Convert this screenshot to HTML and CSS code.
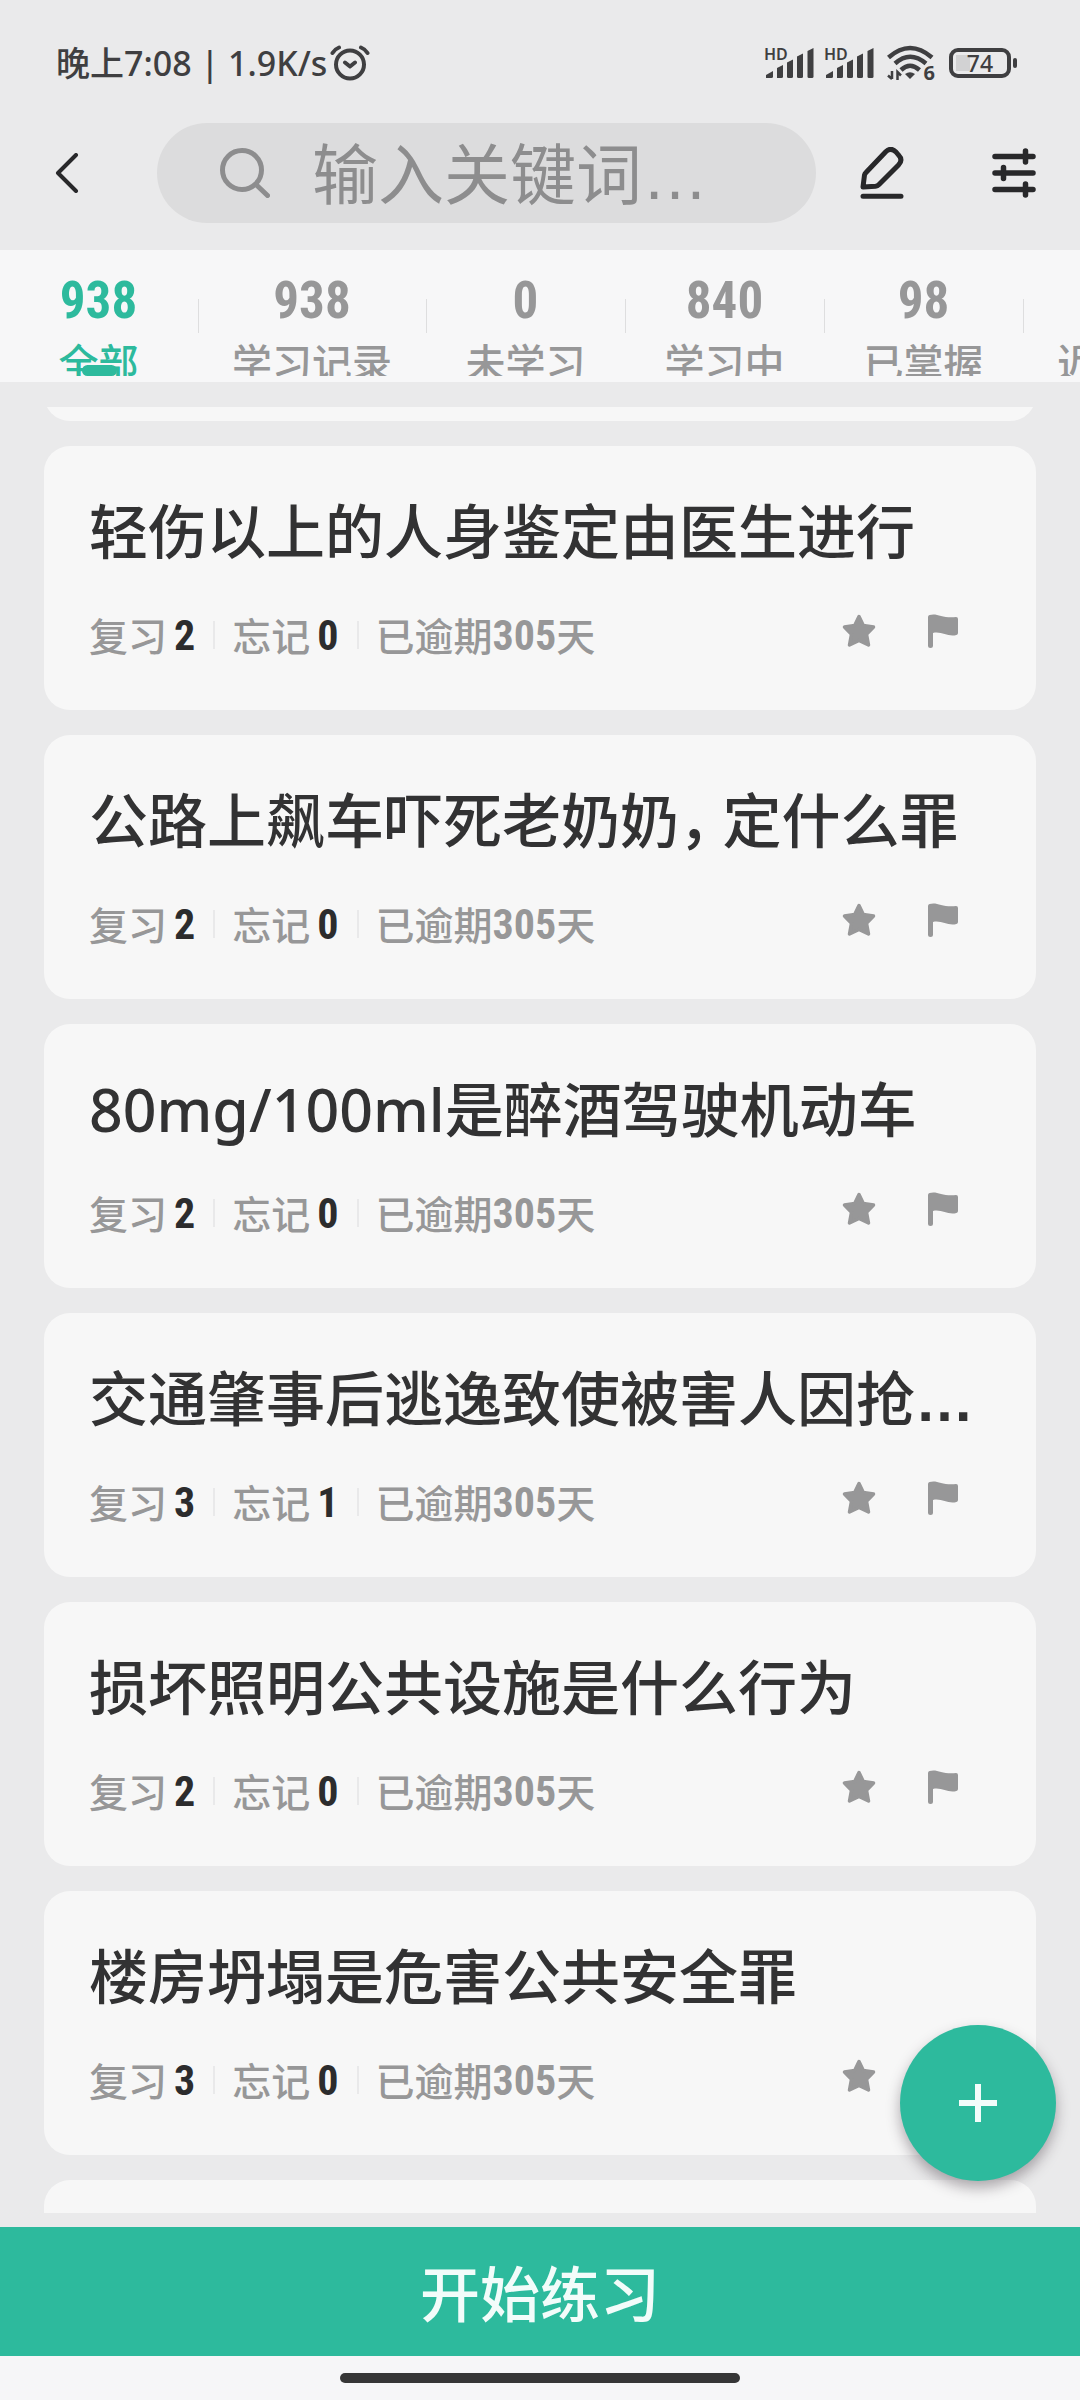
FILE: index.html
```html
<!DOCTYPE html>
<html lang="zh-CN">
<head>
<meta charset="utf-8">
<meta name="viewport" content="width=device-width, initial-scale=1">
<title>学习记录</title>
<link rel="stylesheet" href="styles.css">
</head>
<body>
<svg class="sprite" aria-hidden="true">
  <symbol id="star" viewBox="0 0 34 34"><path d="M17 2.5 21.3 11.5 31.500 13 24.500 20.300 26.500 31 17 26.500 7.500 31 9.500 20.300 2.500 13 12.700 11.500Z" fill="currentColor" stroke="currentColor" stroke-width="3.500" stroke-linejoin="round"/></symbol>
  <symbol id="flag" viewBox="0 0 30 34"><path d="M0 3Q0 1.500 1.500 1C9-1.500 14 4.500 28 3Q30 3 30 5V19Q30 20.500 28.500 21C20 23.500 14 17 5 19V31.500a2.500 2.500 0 0 1-5 0Z" fill="currentColor"/></symbol>
  <symbol id="signal" viewBox="0 0 48 30"><g fill="currentColor"><path d="M0 30V27L7 23V28.500Q7 30 5.500 30Z"/><path d="M11 30V20L17 17V28.500Q17 30 15.500 30Z"/><path d="M21 28.500V14.500L27 11.500V28.500Q27 30 25.500 30H22.500Q21 30 21 28.500Z"/><path d="M31 28.500V8.500L37 5.500V28.500Q37 30 35.500 30H32.500Q31 30 31 28.500Z"/><path d="M41.500 28.500V3L47.500 0V28.500Q47.500 30 46 30H43Q41.500 30 41.500 28.500Z"/></g></symbol>
</svg>
<div class="app">
  <div class="status">
    <span class="clock">晚上7:08 | 1.9K/s</span>
    <svg class="alarm" viewBox="0 0 40 36" fill="none" stroke="currentColor" stroke-width="4" stroke-linecap="round" stroke-linejoin="round"><circle cx="20" cy="19.500" r="14"/><path d="M15 17.500 20 21.500 25 17.500M2.500 8Q5 4 9 2.500M37.500 8Q35 4 31 2.500"/></svg>
    <div class="status-right">
      <div class="sim"><span class="hd">HD</span><svg class="bars"><use href="#signal"/></svg></div>
      <div class="sim"><span class="hd">HD</span><svg class="bars"><use href="#signal"/></svg></div>
      <div class="wifi">
        <svg viewBox="0 0 48 36" fill="none" stroke="currentColor" stroke-width="4.500"><path d="M1.500 12.500Q23 -6.500 45 12.500M8 18.500Q23 5 39 18.500M14 25Q23 16.500 32.500 25"/><path d="M23 34 18 29Q23 25.500 28 29Z" fill="currentColor" stroke="none"/><path d="M5 26V34M5 34 1 30.500M10.500 35V27L14 30.500" stroke-width="2.500"/></svg>
        <span class="gen">6</span>
      </div>
      <div class="battery"><span class="level">74</span></div>
    </div>
  </div>

  <header class="toolbar">
    <button class="icon-btn back" aria-label="返回"><svg viewBox="0 0 24 40" fill="none" stroke="currentColor" stroke-width="4" stroke-linecap="round" stroke-linejoin="round"><path d="M21 2 3 20 21 38"/></svg></button>
    <label class="search">
      <svg viewBox="0 0 50 50" fill="none" stroke="currentColor" stroke-width="5" stroke-linecap="round"><circle cx="22" cy="22" r="19.500"/><path d="M36.500 37 47.500 47.500"/></svg>
      <input type="text" placeholder="输入关键词…" aria-label="输入关键词">
    </label>
    <button class="icon-btn" aria-label="编辑"><svg viewBox="0 0 44 52" fill="none" stroke="currentColor" stroke-width="5" stroke-linecap="round" stroke-linejoin="round"><path d="M3 40 4.500 28Q5 26.500 6 25.500L26 4.500Q31 0 36 5L38.500 8Q43.500 13 38.500 18L19 37.500Q17.500 39 15.500 39.200ZM3 49.300H41"/></svg></button>
    <button class="icon-btn" aria-label="筛选"><svg viewBox="0 0 44 50" fill="none" stroke="currentColor" stroke-width="5.500" stroke-linecap="round"><path d="M3 8.500H41M3 25H41M3 41.500H41M33.500 3V14M11.500 19.500V30.500M33.500 36V47"/></svg></button>
  </header>

  <nav class="tabs">
    <a class="tab active" href="#all"><b>938</b><span>全部</span></a>
    <a class="tab" href="#records"><b>938</b><span>学习记录</span></a>
    <a class="tab" href="#new"><b>0</b><span>未学习</span></a>
    <a class="tab" href="#learning"><b>840</b><span>学习中</span></a>
    <a class="tab" href="#mastered"><b>98</b><span>已掌握</span></a>
    <a class="tab" href="#recent"><b></b><span>近期学习</span></a>
  </nav>

  <main class="list">
    <article class="card scrolled"></article>
    <article class="card">
      <h2>轻伤以上的人身鉴定由医生进行</h2>
      <div class="meta"><span>复习<b>2</b></span><span>忘记<b>0</b></span><span>已逾期<i>305</i>天</span>
        <div class="marks"><button aria-label="收藏"><svg class="star"><use href="#star"/></svg></button><button aria-label="标记"><svg class="flag"><use href="#flag"/></svg></button></div></div>
    </article>
    <article class="card">
      <h2>公路上飙车吓死老奶奶<span class="comma">，</span>定什么罪</h2>
      <div class="meta"><span>复习<b>2</b></span><span>忘记<b>0</b></span><span>已逾期<i>305</i>天</span>
        <div class="marks"><button aria-label="收藏"><svg class="star"><use href="#star"/></svg></button><button aria-label="标记"><svg class="flag"><use href="#flag"/></svg></button></div></div>
    </article>
    <article class="card">
      <h2>80mg/100ml是醉酒驾驶机动车</h2>
      <div class="meta"><span>复习<b>2</b></span><span>忘记<b>0</b></span><span>已逾期<i>305</i>天</span>
        <div class="marks"><button aria-label="收藏"><svg class="star"><use href="#star"/></svg></button><button aria-label="标记"><svg class="flag"><use href="#flag"/></svg></button></div></div>
    </article>
    <article class="card">
      <h2>交通肇事后逃逸致使被害人因抢<span class="dots">…</span></h2>
      <div class="meta"><span>复习<b>3</b></span><span>忘记<b>1</b></span><span>已逾期<i>305</i>天</span>
        <div class="marks"><button aria-label="收藏"><svg class="star"><use href="#star"/></svg></button><button aria-label="标记"><svg class="flag"><use href="#flag"/></svg></button></div></div>
    </article>
    <article class="card">
      <h2>损坏照明公共设施是什么行为</h2>
      <div class="meta"><span>复习<b>2</b></span><span>忘记<b>0</b></span><span>已逾期<i>305</i>天</span>
        <div class="marks"><button aria-label="收藏"><svg class="star"><use href="#star"/></svg></button><button aria-label="标记"><svg class="flag"><use href="#flag"/></svg></button></div></div>
    </article>
    <article class="card">
      <h2>楼房坍塌是危害公共安全罪</h2>
      <div class="meta"><span>复习<b>3</b></span><span>忘记<b>0</b></span><span>已逾期<i>305</i>天</span>
        <div class="marks"><button aria-label="收藏"><svg class="star"><use href="#star"/></svg></button><button aria-label="标记"><svg class="flag"><use href="#flag"/></svg></button></div></div>
    </article>
    <article class="card"></article>
  </main>

  <footer class="bottom">
    <button class="fab" aria-label="添加"><svg viewBox="0 0 40 40" fill="none" stroke="currentColor" stroke-width="6"><path d="M20 1V39M1 20H39"/></svg></button>
    <button class="start">开始练习</button>
    <div class="home"></div>
  </footer>
</div>
</body>
</html>
```
FILE: styles.css
```css
* { box-sizing: border-box; }

:root {
  --green: #2dba9d;
  --ink: #323233;
  --grey: #979798;
  --cjk: "Noto Sans", "Noto Sans CJK SC", sans-serif;
  --narrow: "Liberation Sans Narrow", "Roboto Condensed", "Roboto", sans-serif;
}

body {
  margin: 0;
  background: #eaeaeb;
  color: var(--ink);
  font-family: var(--cjk);
}

button {
  margin: 0;
  padding: 0;
  border: 0;
  background: none;
  color: inherit;
  font: inherit;
}

svg { display: block; }
.sprite { position: absolute; width: 0; height: 0; }

.app {
  display: flex;
  flex-direction: column;
  height: 100vh;
  overflow: hidden;
}

/* status bar */
.status {
  display: flex;
  align-items: center;
  height: 95px;
  padding: 31px 67px 0 56px;
  color: #3f3f41;
}
.clock { font-size: 34px; line-height: 40px; font-weight: 500; white-space: pre; }
.alarm { width: 40px; height: 36px; margin-left: 3px; }
.status-right { display: flex; align-items: center; gap: 10px; margin-left: auto; }
.sim { position: relative; width: 50px; height: 32px; padding: 1px 0 0 2px; }
.bars { width: 48px; height: 30px; }
.hd {
  position: absolute;
  left: 0;
  top: -1px;
  font-size: 16px;
  line-height: 16px;
  font-weight: 600;
}
.wifi { position: relative; width: 48px; height: 36px; margin: 0 4px 0 3px; }
.wifi svg { width: 48px; height: 36px; }
.gen {
  position: absolute;
  right: 0;
  bottom: -1px;
  font-size: 20px;
  line-height: 18px;
  font-weight: 700;
}
.battery {
  position: relative;
  width: 62px;
  height: 30px;
  margin-right: 2px;
  border: 4px solid currentColor;
  border-radius: 9px;
  background: linear-gradient(#d2d2d3, #d2d2d3) 3px 3px / 14px 16px no-repeat;
}
.battery::after {
  content: "";
  position: absolute;
  right: -10px;
  top: 6px;
  width: 4px;
  height: 10px;
  border-radius: 2px;
  background: currentColor;
}
.level {
  display: block;
  text-align: center;
  font-size: 23px;
  line-height: 22px;
  font-weight: 500;
}

/* search toolbar */
.toolbar {
  display: flex;
  align-items: center;
  height: 155px;
  padding: 0 44px 0 55px;
  color: #28282a;
}
.back { width: 24px; margin-right: 78px; }
.back svg { height: 40px; }
.icon-btn + .icon-btn { margin-left: 88px; }
.icon-btn svg { width: 100%; }
.icon-btn:not(.back) { width: 44px; }
.search {
  display: flex;
  align-items: center;
  flex: 1;
  min-width: 0;
  height: 100px;
  margin-right: 44px;
  padding: 0 50px 0 63px;
  border-radius: 50px;
  background: #dcdcdd;
  color: #8d8d8e;
}
.search svg { flex: none; width: 50px; height: 50px; }
.search input {
  flex: 1;
  min-width: 0;
  height: 96px;
  margin-left: 42px;
  padding: 6px 0 0;
  border: 0;
  outline: 0;
  background: none;
  color: var(--ink);
  font-family: "Liberation Sans", "Noto Sans CJK SC", sans-serif;
  font-size: 66px;
}
.search input::placeholder { color: #8d8d8e; opacity: 1; }

/* filter tabs */
.tabs {
  display: flex;
  flex: none;
  height: 132px;
  padding: 26px 0 6px;
  overflow: hidden;
  background: #f7f7f8;
}
.tab {
  position: relative;
  display: flex;
  flex: none;
  flex-direction: column;
  align-items: center;
  min-width: 199px;
  height: 100px;
  padding: 0 35px 0 33px;
  overflow: hidden;
  color: var(--grey);
  text-decoration: none;
}
.tab::after {
  content: "";
  position: absolute;
  right: 0;
  top: 23px;
  width: 1px;
  height: 34px;
  background: #dededf;
}
.tab b { flex: none; height: 67px; font: 700 51px/50px var(--narrow); }
.tab span { font-size: 40px; line-height: 40px; font-weight: 500; white-space: nowrap; }
.active { color: var(--green); }
.active::before {
  content: "";
  position: absolute;
  left: 82px;
  bottom: 0;
  width: 35px;
  height: 11px;
  border-radius: 6px;
  background: var(--green);
}

/* question list */
.list {
  display: flex;
  flex: 1;
  flex-direction: column;
  gap: 25px;
  min-height: 0;
  margin: 25px 44px 14px;
  overflow: hidden;
}
.card {
  flex: none;
  height: 264px;
  padding: 50px 45px 0;
  border-radius: 26px;
  background: #f7f7f7;
}
.scrolled { margin-top: -250px; }
h2 {
  height: 70px;
  margin: 0;
  font-size: 59px;
  line-height: 70px;
  font-weight: 500;
  white-space: nowrap;
}
.comma { padding-right: 14px; font-feature-settings: "halt"; }
.dots { font-family: "Liberation Sans", sans-serif; font-weight: 700; line-height: 1; }
.meta {
  display: flex;
  align-items: center;
  height: 50px;
  margin-top: 45px;
  color: var(--grey);
  font-size: 39px;
  line-height: 50px;
  font-weight: 500;
}
.meta span { display: flex; align-items: center; }
.meta span + span { margin-left: 18px; padding-left: 19px; background: linear-gradient(#e9e9ea, #e9e9ea) 0 10px / 2px 28px no-repeat; }
.meta b,
.meta i { font: 700 42px/46px var(--narrow); }
.meta b { margin-left: 7px; color: #2c2c2d; }
.marks { display: flex; gap: 52px; height: 46px; margin: 0 33px 0 auto; }
.marks button { height: 36px; }
.star { width: 34px; height: 34px; }
.flag { width: 30px; height: 34px; }

/* bottom action */
.bottom { position: relative; flex: none; background: #f6f6f8; }
.start {
  display: block;
  width: 100%;
  height: 129px;
  padding-bottom: 2px;
  background: var(--green);
  color: #f2fcfa;
  font-size: 60px;
  font-weight: 500;
}
.home { width: 37%; height: 10px; margin: 17px auto; border-radius: 5px; background: #363637; }
.fab {
  position: absolute;
  right: 24px;
  bottom: 219px;
  display: grid;
  place-items: center;
  width: 156px;
  height: 156px;
  border-radius: 50%;
  background: var(--green);
  box-shadow: 0 7px 14px rgba(60, 50, 60, .4);
  color: #f2fcfa;
}
.fab svg { width: 40px; height: 40px; }
```
